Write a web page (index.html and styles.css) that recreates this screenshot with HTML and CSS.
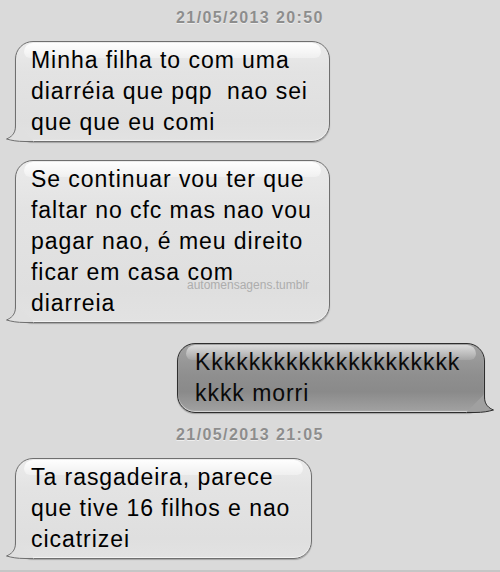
FILE: index.html
```html
<!DOCTYPE html>
<html lang="pt">
  <head>
    <meta charset="UTF-8" />
    <meta name="viewport" content="width=device-width, initial-scale=1.0" />
    <title>Mensagens</title>
    <link rel="stylesheet" href="styles.css">
  </head>
  <body>
    <main class="thread">
      <p class="stamp">21/05/2013 20:50</p>

      <div class="bubble in b-one">
        <p>Minha filha to com uma<br>diarréia que pqp&nbsp; nao sei<br>que que eu comi</p>
        <svg class="tail" viewBox="0 0 40 40" width="40" height="40">
          <path class="tail-fill" d="M10.5 10 L10.5 22 C10.5 30 6 33 1.5 35 C7 36.5 12 37.5 20 37.5 L29 37.5 L10.5 19 Z" />
          <path class="tail-line" d="M10.5 10 L10.5 22 C10.5 30 6 33 1.5 35 C7 36.5 12 37.5 20 37.5 L28 37.5" />
        </svg>
      </div>

      <div class="bubble in b-two">
        <p>Se continuar vou ter que<br>faltar no cfc mas nao vou<br>pagar nao, é meu direito<br>ficar em casa com<br>diarreia</p>
        <span class="mark">automensagens.tumblr</span>
        <svg class="tail" viewBox="0 0 40 40" width="40" height="40">
          <path class="tail-fill" d="M10.5 10 L10.5 22 C10.5 30 6 33 1.5 35 C7 36.5 12 37.5 20 37.5 L29 37.5 L10.5 19 Z" />
          <path class="tail-line" d="M10.5 10 L10.5 22 C10.5 30 6 33 1.5 35 C7 36.5 12 37.5 20 37.5 L28 37.5" />
        </svg>
      </div>

      <div class="bubble out b-three">
        <p>Kkkkkkkkkkkkkkkkkkkkk<br>kkkk morri</p>
        <svg class="tail" viewBox="0 0 40 40" width="40" height="40">
          <path class="tail-fill" d="M10.5 10 L10.5 22 C10.5 30 6 33 1.5 35 C7 36.5 12 37.5 20 37.5 L29 37.5 L10.5 19 Z" />
          <path class="tail-line" d="M10.5 10 L10.5 22 C10.5 30 6 33 1.5 35 C7 36.5 12 37.5 20 37.5 L28 37.5" />
        </svg>
      </div>

      <p class="stamp second">21/05/2013 21:05</p>

      <div class="bubble in b-four">
        <p>Ta rasgadeira, parece<br>que tive 16 filhos e nao<br>cicatrizei</p>
        <svg class="tail" viewBox="0 0 40 40" width="40" height="40">
          <path class="tail-fill" d="M10.5 10 L10.5 22 C10.5 30 6 33 1.5 35 C7 36.5 12 37.5 20 37.5 L29 37.5 L10.5 19 Z" />
          <path class="tail-line" d="M10.5 10 L10.5 22 C10.5 30 6 33 1.5 35 C7 36.5 12 37.5 20 37.5 L28 37.5" />
        </svg>
      </div>
    </main>
    <div class="edge"></div>
  </body>
</html>
```

FILE: styles.css
```css
body {
  margin: 0;
  width: 500px;
  height: 572px;
  overflow: hidden;
  background-color: #dadada;
  font-family: "Liberation Sans", Arial, sans-serif;
  position: relative;
}

.thread {
  display: flex;
  flex-direction: column;
  padding-top: 8px;
}

.stamp {
  margin: 0 0 13px;
  height: 20px;
  line-height: 20px;
  text-align: center;
  font-size: 16px;
  font-weight: bold;
  letter-spacing: 1.4px;
  color: #8d8d8d;
  text-shadow: 0 1px 0 #eeeeee;
}
.stamp.second {
  margin-top: 12px;
}

.bubble {
  position: relative;
  z-index: 0;
  box-sizing: border-box;
  border: 1px solid #6f6f6f;
  border-radius: 18px;
  padding: 3px 6px 3px 15px;
  box-shadow: 0 1px 1px rgba(0, 0, 0, 0.25), inset 0 -1px 1px rgba(255, 255, 255, 0.6);

  p {
    margin: 0;
    font-size: 23px;
    line-height: 31px;
    letter-spacing: 0.95px;
    color: #000;
    white-space: nowrap;
  }

  &::before {
    content: "";
    position: absolute;
    z-index: -1;
    top: 1px;
    left: 8px;
    right: 8px;
    height: 15px;
    border-radius: 14px 14px 10px 10px;
  }
}

.bubble.in {
  margin-left: 15px;
  background: linear-gradient(#ebebeb, #e3e3e3 30%, #dfdfdf 80%, #e2e2e2);

  &::before {
    background: linear-gradient(rgba(255, 255, 255, 0.95), rgba(255, 255, 255, 0.35));
  }
  .tail {
    left: -11px;
  }
  .tail-fill {
    fill: #e0e0e0;
  }
}

.bubble.out {
  align-self: flex-end;
  margin-right: 15px;
  padding-left: 17px;
  border-color: #2e2e2e;
  background: linear-gradient(#a3a3a3, #8f8f8f 45%, #8a8a8a 70%, #a2a2a2);

  &::before {
    background: linear-gradient(rgba(230, 230, 230, 0.85), rgba(200, 200, 200, 0.25));
  }
  p {
    color: #0a0a0a;
  }
  .tail {
    right: -11px;
    transform: scaleX(-1);
  }
  .tail-fill {
    fill: #a0a0a0;
  }
  .tail-line {
    stroke: #2e2e2e;
  }
}

.tail {
  position: absolute;
  z-index: -1;
  bottom: -3px;
}
.tail-line {
  fill: none;
  stroke: #6f6f6f;
  stroke-width: 1;
}

.b-one {
  width: 315px;
  margin-bottom: 18px;
}
.b-two {
  width: 315px;
  margin-bottom: 20px;
}
.b-three {
  width: 308px;
}
.b-four {
  width: 297px;
}

.mark {
  position: absolute;
  left: 171px;
  top: 117px;
  font-size: 12px;
  line-height: 14px;
  color: #adadad;
}

.edge {
  position: absolute;
  left: 0;
  right: 0;
  bottom: 0;
  height: 2px;
  background: #c6c6c6;
}
```
